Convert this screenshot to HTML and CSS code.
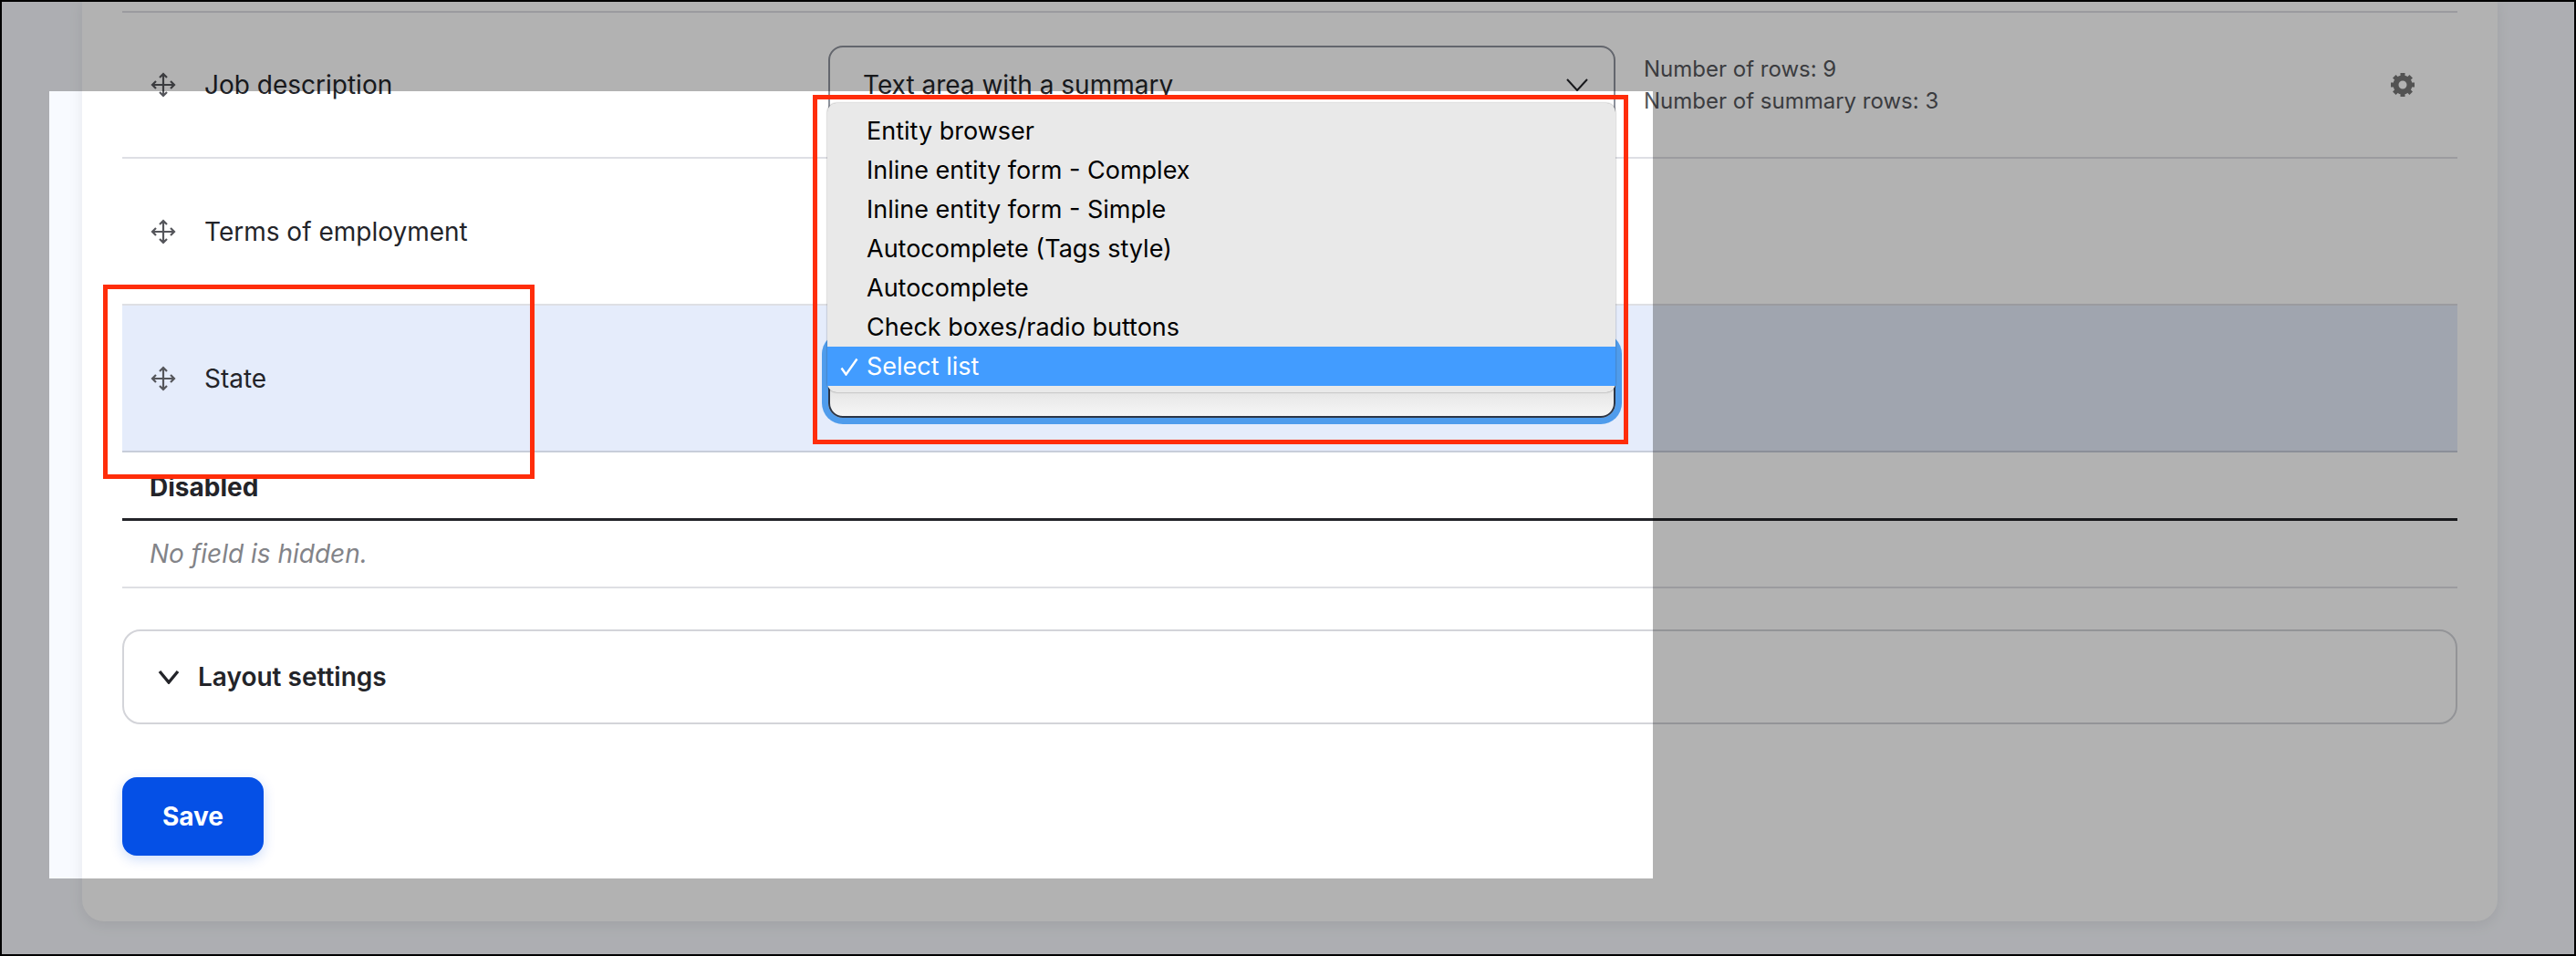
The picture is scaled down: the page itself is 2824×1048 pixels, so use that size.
FILE: index.html
```html
<!DOCTYPE html>
<html lang="en">
<head>
    <meta charset="UTF-8">
    <title>Manage form display</title>
    <link rel="stylesheet" href="styles.css">
</head>
<body>
    <div class="card">
        <div class="row row-top">
            <svg class="move" viewBox="0 0 28 28"><path d="M14 2v24M2 14h24M10 6l4-4 4 4M10 22l4 4 4-4M6 10l-4 4 4 4M22 10l4 4-4 4"/></svg>
            <span class="name">Job description</span>
            <div class="select">
                <span>Text area with a summary</span>
                <svg class="chevron" viewBox="0 0 24 14"><path d="M1 1l11 12L23 1"/></svg>
            </div>
            <div class="summary">
                <div>Number of rows: 9</div>
                <div>Number of summary rows: 3</div>
            </div>
            <svg class="gear" viewBox="0 0 28 28">
                <circle cx="14" cy="14" r="7.5"/>
                <path d="M14 1v6M14 21v6M1 14h6M21 14h6M4.8 4.8l4.2 4.2M19 19l4.2 4.2M23.2 4.8L19 9M9 19l-4.2 4.2"/>
            </svg>
        </div>
        <div class="row">
            <svg class="move" viewBox="0 0 28 28"><path d="M14 2v24M2 14h24M10 6l4-4 4 4M10 22l4 4 4-4M6 10l-4 4 4 4M22 10l4 4-4 4"/></svg>
            <span class="name">Terms of employment</span>
            <div class="select"></div>
        </div>
        <div class="row row-active">
            <svg class="move" viewBox="0 0 28 28"><path d="M14 2v24M2 14h24M10 6l4-4 4 4M10 22l4 4 4-4M6 10l-4 4 4 4M22 10l4 4-4 4"/></svg>
            <span class="name">State</span>
            <div class="select select-open">
                <ul class="menu">
                    <li>Entity browser</li>
                    <li>Inline entity form - Complex</li>
                    <li>Inline entity form - Simple</li>
                    <li>Autocomplete (Tags style)</li>
                    <li>Autocomplete</li>
                    <li>Check boxes/radio buttons</li>
                    <li class="selected">
                        <svg class="check" viewBox="0 0 20 20"><path d="M1.5 11.5l5 7L18.5 1.5"/></svg>
                        Select list
                    </li>
                </ul>
            </div>
        </div>
        <div class="disabled-title">Disabled</div>
        <div class="empty">No field is hidden.</div>
        <div class="details">
            <svg class="details-arrow" viewBox="0 0 24 16"><path d="M2 2l10 12L22 2"/></svg>
            <span>Layout settings</span>
        </div>
        <button class="save">Save</button>
    </div>

    <div class="spotlight"></div>
    <div class="callout callout-state"></div>
    <div class="callout callout-menu"></div>
    <div class="frame"></div>
</body>
</html>
```

FILE: styles.css
```css
html, body {
    margin: 0;
    height: 100%;
}
body {
    height: 1048px;
    overflow: hidden;
    position: relative;
    background: #f8faff;
    font-family: Inter, "Liberation Sans", sans-serif;
    color: #232429;
}
.card {
    margin: 0 86px 0 90px;
    height: 1010px;
    box-sizing: border-box;
    padding: 12px 44px 0;
    background: white;
    border-radius: 0 0 24px 24px;
    box-shadow: 0 4px 16px rgba(0, 0, 0, 0.08);
}
.row {
    height: 161px;
    box-sizing: border-box;
    display: flex;
    align-items: center;
    padding-left: 31px;
    border-bottom: 2px solid #dedfe4;
}
.row-top {
    border-top: 2px solid #dedfe4;
    height: 162px;
}
.row-active {
    background: #e5ecfb;
    border-bottom-color: #c8cdda;
}
.move {
    width: 28px;
    height: 28px;
    flex: none;
    margin-right: 31px;
}
.move path {
    fill: none;
    stroke: #55565b;
    stroke-width: 2.2;
}
.name {
    width: 684px;
    flex: none;
    font-size: 28px;
}
.select {
    width: 863px;
    height: 86px;
    flex: none;
    box-sizing: border-box;
    position: relative;
    display: flex;
    align-items: center;
    justify-content: space-between;
    padding: 0 28px 0 36px;
    background: white;
    border: 2px solid #8e929c;
    border-radius: 16px;
    font-size: 28px;
}
.chevron {
    width: 24px;
    height: 14px;
}
.chevron path {
    fill: none;
    stroke: #232429;
    stroke-width: 2;
}
.select-open {
    background: linear-gradient(#c4c4c4, #f6f6f6);
    border-color: #2c3646;
    box-shadow: 0 0 0 7px #4f9cec;
}
.menu {
    position: absolute;
    top: -261px;
    left: -3px;
    width: 864px;
    height: 317px;
    box-sizing: border-box;
    margin: 0;
    padding: 9px 0 0;
    list-style: none;
    background: #e9e9e9;
    border-radius: 10px;
    box-shadow: 0 0 2px rgba(0, 0, 0, 0.45);
    color: black;
    font-size: 27px;
}
.menu li {
    height: 43px;
    line-height: 43px;
    padding-left: 43px;
    position: relative;
}
.menu .selected {
    background: #429cff;
    color: white;
}
.check {
    position: absolute;
    left: 14px;
    top: 12px;
    width: 20px;
    height: 20px;
}
.check path {
    fill: none;
    stroke: white;
    stroke-width: 2.4;
}
.summary {
    margin-left: 31px;
    width: 818px;
    flex: none;
    font-size: 24px;
    line-height: 35px;
    color: #55565b;
}
.gear {
    width: 28px;
    height: 28px;
    flex: none;
}
.gear circle {
    fill: none;
    stroke: #787878;
    stroke-width: 6;
}
.gear path {
    fill: none;
    stroke: #787878;
    stroke-width: 5;
}
.disabled-title {
    height: 75px;
    box-sizing: border-box;
    padding: 21px 0 0 30px;
    font-size: 28px;
    font-weight: 700;
    border-bottom: 3px solid #232429;
}
.empty {
    height: 74px;
    box-sizing: border-box;
    line-height: 72px;
    padding-left: 30px;
    font-size: 28px;
    font-style: italic;
    color: #828388;
    border-bottom: 2px solid #dedfe4;
}
.details {
    margin-top: 45px;
    height: 104px;
    box-sizing: border-box;
    display: flex;
    align-items: center;
    padding-left: 37px;
    border: 2px solid #d3d4d9;
    border-radius: 20px;
    font-size: 28px;
    font-weight: 600;
}
.details-arrow {
    width: 24px;
    height: 16px;
    margin-right: 20px;
}
.details-arrow path {
    fill: none;
    stroke: #232429;
    stroke-width: 3.4;
}
.save {
    display: block;
    margin-top: 58px;
    width: 155px;
    height: 86px;
    border: none;
    border-radius: 16px;
    background: #0550e6;
    color: white;
    font-family: inherit;
    font-size: 28px;
    font-weight: 700;
    box-shadow: 0 4px 14px rgba(5, 80, 230, 0.2);
}
/* dimmed page around the lit area */
.spotlight {
    position: absolute;
    left: 54px;
    top: 100px;
    width: 1758px;
    height: 863px;
    box-shadow: 0 0 0 3000px rgba(0, 0, 0, 0.3);
    pointer-events: none;
}
.callout {
    position: absolute;
    box-sizing: border-box;
    border: 5px solid #ff2d0a;
}
.callout-state {
    left: 113px;
    top: 312px;
    width: 473px;
    height: 213px;
}
.callout-menu {
    left: 891px;
    top: 104px;
    width: 894px;
    height: 383px;
}
.frame {
    position: absolute;
    inset: 0;
    border: 2px solid black;
    pointer-events: none;
}
```
